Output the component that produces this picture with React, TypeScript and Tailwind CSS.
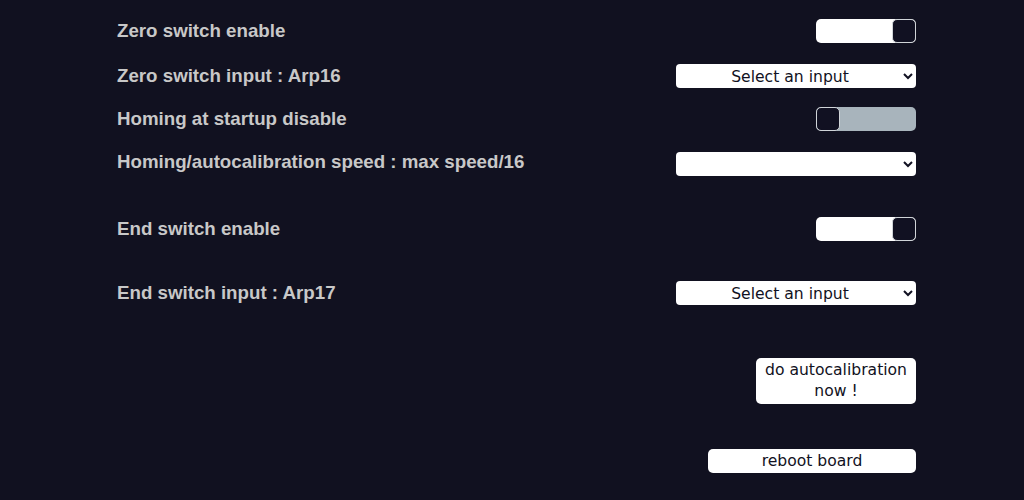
import { useState } from "react";

function Toggle({ on, onClick }: { on: boolean; onClick: () => void }) {
  return (
    <button
      type="button"
      onClick={onClick}
      className={
        "flex h-6 w-[100px] rounded-[5px] cursor-pointer " +
        (on ? "justify-end bg-white" : "justify-start bg-[#a8b4bc]")
      }
    >
      <span className="block h-6 w-6 rounded-[5px] border border-[#d0d4d8] bg-[#111122]" />
    </button>
  );
}

function Select({ value }: { value: string }) {
  return (
    <select
      className="h-6 w-[240px] rounded-[4px] bg-white pt-px text-center text-[15.6px] text-[#111122] outline-none"
      style={{ fontFamily: '"DejaVu Sans", Verdana, sans-serif' }}
      defaultValue={value}
    >
      {value && <option value={value}>{value}</option>}
      {!value && <option value=""></option>}
    </select>
  );
}

export default function App() {
  const [zero, setZero] = useState(true);
  const [homing, setHoming] = useState(false);
  const [end, setEnd] = useState(true);

  const label = "text-[18.72px] font-bold text-[#c8c8c8] leading-6";

  return (
    <div
      className="min-h-[500px] w-full bg-[#111120] pl-[117px] pt-[19px]"
      style={{ fontFamily: '"Liberation Sans", Arial, sans-serif' }}
    >
      <div className="flex w-[799px] flex-col">
        <div className="flex items-center justify-between">
          <span className={label}>Zero switch enable</span>
          <Toggle on={zero} onClick={() => setZero(!zero)} />
        </div>
        <div className="mt-[21px] flex items-center justify-between">
          <span className={label}>Zero switch input : Arp16</span>
          <Select value="Select an input" />
        </div>
        <div className="mt-[19px] flex items-center justify-between">
          <span className={label}>Homing at startup disable</span>
          <Toggle on={homing} onClick={() => setHoming(!homing)} />
        </div>
        <div className="mt-[21px] flex items-center justify-between">
          <span className={label + " -mt-1"}>Homing/autocalibration speed : max speed/16</span>
          <Select value="" />
        </div>
        <div className="mt-[41px] flex items-center justify-between">
          <span className={label}>End switch enable</span>
          <Toggle on={end} onClick={() => setEnd(!end)} />
        </div>
        <div className="mt-[40px] flex items-center justify-between">
          <span className={label}>End switch input : Arp17</span>
          <Select value="Select an input" />
        </div>
        <div className="mt-[53px] flex justify-end">
          <button
            type="button"
            className="h-[46px] w-[160px] rounded-[5px] bg-white text-[15.6px] leading-[21px] text-[#111122]"
            style={{ fontFamily: '"DejaVu Sans", Verdana, sans-serif' }}
          >
            do autocalibration
            <br />
            now !
          </button>
        </div>
        <div className="mt-[45px] flex justify-end">
          <button
            type="button"
            className="h-6 w-[208px] rounded-[5px] bg-white text-[15.6px] leading-6 text-[#111122]"
            style={{ fontFamily: '"DejaVu Sans", Verdana, sans-serif' }}
          >
            reboot board
          </button>
        </div>
      </div>
    </div>
  );
}
